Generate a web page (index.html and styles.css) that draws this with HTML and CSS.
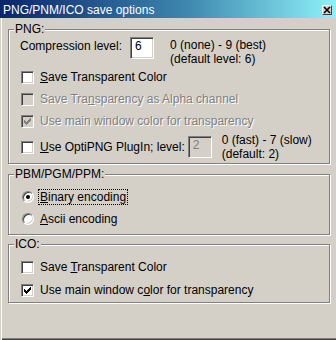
FILE: index.html
```html
<!DOCTYPE html>
<html>
<head>
    <title>PNG/PNM/ICO save options</title>
    <meta charset="UTF-8">
    <link rel="stylesheet" href="styles.css">
</head>
<body>
    <div class="window">
        <div class="titlebar">
            <span class="title">PNG/PNM/ICO save options</span>
            <span class="close-btn">
                <svg width="8" height="8" viewBox="0 0 8 8"><path d="M1 1L7 7M7 1L1 7" stroke="#000" stroke-width="1.6"/></svg>
            </span>
        </div>

        <div class="client">
            <!-- PNG -->
            <fieldset class="group group-png">
                <legend>PNG:</legend>
                <div class="level-row">
                    <span class="level-label">Compression level:</span>
                    <span class="field field-level">6</span>
                    <span class="hint hint-level">0 (none) - 9 (best)<br>(default level: 6)</span>
                </div>
                <div class="option">
                    <span class="checkbox"></span>
                    <span class="caption"><u>S</u>ave Transparent Color</span>
                </div>
                <div class="option disabled">
                    <span class="checkbox"></span>
                    <span class="caption">Save Tra<u>n</u>sparency as Alpha channel</span>
                </div>
                <div class="option disabled">
                    <span class="checkbox">
                        <svg width="11" height="11" viewBox="0 0 11 11"><path d="M2 4h1v3H2zM3 5h1v3H3zM4 6h1v3H4zM5 5h1v3H5zM6 4h1v3H6zM7 3h1v3H7zM8 2h1v3H8z"/></svg>
                    </span>
                    <span class="caption">Use main window color for transparency</span>
                </div>
                <div class="option opti-row">
                    <span class="checkbox"></span>
                    <span class="caption"><u>U</u>se OptiPNG PlugIn; level:</span>
                    <span class="field field-opti">2</span>
                    <span class="hint hint-opti">0 (fast) - 7 (slow)<br>(default: 2)</span>
                </div>
            </fieldset>

            <!-- PBM/PGM/PPM -->
            <fieldset class="group group-pnm">
                <legend>PBM/PGM/PPM:</legend>
                <div class="option">
                    <span class="radio selected"></span>
                    <span class="radio-caption focused"><u>B</u>inary encoding</span>
                </div>
                <div class="option">
                    <span class="radio"></span>
                    <span class="radio-caption"><u>A</u>scii encoding</span>
                </div>
            </fieldset>

            <!-- ICO -->
            <fieldset class="group group-ico">
                <legend>ICO:</legend>
                <div class="option">
                    <span class="checkbox"></span>
                    <span class="caption">Save <u>T</u>ransparent Color</span>
                </div>
                <div class="option option-second">
                    <span class="checkbox">
                        <svg width="11" height="11" viewBox="0 0 11 11"><path d="M2 4h1v3H2zM3 5h1v3H3zM4 6h1v3H4zM5 5h1v3H5zM6 4h1v3H6zM7 3h1v3H7zM8 2h1v3H8z"/></svg>
                    </span>
                    <span class="caption">Use main window c<u>o</u>lor for transparency</span>
                </div>
            </fieldset>
        </div>
    </div>
</body>
</html>
```

FILE: styles.css
```css
body {
    margin: 0;
    background-color: #d4d0c8;
    font-family: "Liberation Sans", Arial, sans-serif;
    font-size: 12px;
    line-height: 14px;
    color: #000;
}

.window {
    width: 336px;
    height: 340px;
    display: flex;
    flex-direction: column;
    background-color: #d4d0c8;
}

/* title bar */
.titlebar {
    height: 18px;
    flex-shrink: 0;
    display: flex;
    align-items: center;
    justify-content: space-between;
    padding: 0 4px 0 3px;
    box-sizing: border-box;
    background: linear-gradient(to right, #0a246a 0%, #3d86ae 55%, #8ef2f8 100%);
    color: #fff;
}

.title {
    line-height: 16px;
    padding-top: 1px;
}

.close-btn {
    width: 10px;
    height: 10px;
    box-sizing: border-box;
    display: flex;
    align-items: center;
    justify-content: center;
    background-color: #d4d0c8;
    border: 1px solid;
    border-color: #fff #404040 #404040 #fff;
    margin-top: 1px;
}

.close-btn svg {
    display: block;
}

/* dialog body */
.client {
    flex: 1;
    padding-top: 4px;
    box-shadow: inset 1px 0 #d4d0c8, inset 2px 0 #fff, inset 0 -1px #404040, inset 0 -2px #808080;
}

.group {
    margin: 0 6px 0 8px;
    padding: 0 10px 4px 11px;
    border: 1px solid #808080;
    box-shadow: inset 1px 1px #fff, 1px 1px #fff;
    min-width: 0;
}

.group legend {
    margin-left: -6px;
    padding: 0 1px;
    background-color: #d4d0c8;
}

.group-png {
    padding-bottom: 5px;
}

.group-pnm {
    margin-top: 3px;
    padding-top: 5px;
    padding-bottom: 4px;
}

.group-ico {
    margin-top: 2px;
    padding-top: 5px;
    padding-bottom: 1px;
}

/* compression level */
.level-row {
    display: flex;
    align-items: flex-start;
    padding-top: 1px;
}

.level-label {
    margin-top: 2px;
}

.field {
    box-sizing: border-box;
    width: 24px;
    height: 22px;
    padding: 1px 0 0 4px;
    background-color: #fff;
    border: 1px solid;
    border-color: #808080 #fff #fff #808080;
    box-shadow: inset 1px 1px #404040, inset -1px -1px #d4d0c8;
}

.field-level {
    margin-left: 8px;
}

.hint-level {
    margin-left: 16px;
    margin-top: 1px;
}

/* checkbox rows */
.option {
    display: flex;
    align-items: center;
    height: 22px;
    padding-left: 1px;
}

.option-second {
    margin-top: 1px;
}

.checkbox {
    box-sizing: border-box;
    width: 13px;
    height: 13px;
    flex-shrink: 0;
    margin-right: 6px;
    background-color: #fff;
    border: 1px solid;
    border-color: #808080 #fff #fff #808080;
    box-shadow: inset 1px 1px #404040, inset -1px -1px #d4d0c8;
}

.checkbox svg {
    display: block;
    fill: #000;
}

.disabled .checkbox {
    background-color: #d4d0c8;
}

.disabled .checkbox svg {
    fill: #808080;
}

.disabled .caption {
    color: #808080;
    text-shadow: 1px 1px 0 #fff;
}

.opti-row {
    margin-top: 4px;
}

.field-opti {
    margin-left: 3px;
    background-color: #d4d0c8;
    color: #808080;
}

.hint-opti {
    margin-left: 10px;
}

/* radio buttons */
.radio {
    position: relative;
    box-sizing: border-box;
    width: 12px;
    height: 12px;
    flex-shrink: 0;
    margin-left: 1px;
    margin-right: 4px;
    border-radius: 50%;
    background-color: #fff;
    border: 1px solid;
    border-color: #808080 #fff #fff #808080;
    box-shadow: inset 1px 1px #404040, inset -1px -1px #d4d0c8;
}

.radio.selected::after {
    content: "";
    position: absolute;
    left: 3px;
    top: 3px;
    width: 4px;
    height: 4px;
    border-radius: 50%;
    background-color: #000;
}

.radio-caption {
    padding: 0 1px;
    border: 1px dotted transparent;
}

.radio-caption.focused {
    border-color: #000;
}
```
